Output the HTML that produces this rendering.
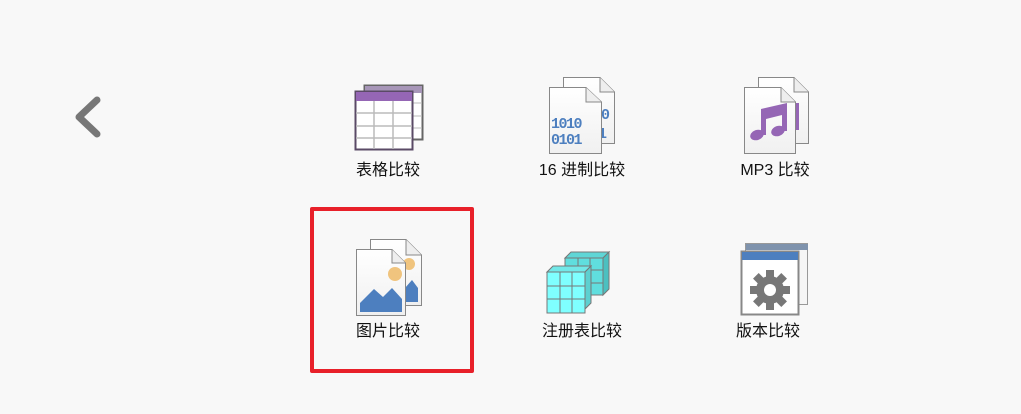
<!DOCTYPE html>
<html><head><meta charset="utf-8"><style>
html,body{margin:0;padding:0;background:#f8f8f8;width:1021px;height:414px;overflow:hidden;position:relative;font-family:"Liberation Sans","Noto Sans CJK SC",sans-serif;}
svg{position:absolute;left:0;top:0}
.l{position:absolute;font-size:16px;color:#111;white-space:nowrap;transform:translateX(-50%);line-height:20px}
.box{position:absolute;left:310px;top:207px;width:156px;height:158px;border:4px solid #e8202a;border-radius:2px}
</style></head><body>
<svg width="1021" height="414" viewBox="0 0 1021 414">
<defs>
<linearGradient id="pg" x1="0" y1="0" x2="0" y2="1"><stop offset="0" stop-color="#fff"/><stop offset="1" stop-color="#f0f0f0"/></linearGradient>
</defs>
<polyline points="97,100 79,117 97,134" fill="none" stroke="#777" stroke-width="7" stroke-linecap="round" stroke-linejoin="round"/>

<!-- table icon -->
<rect x="364.5" y="85.5" width="58" height="54" fill="#fff" stroke="#666" stroke-width="2"/>
<rect x="365" y="86" width="57" height="7" fill="#a796b8"/>
<g stroke="#bbb"><line x1="412" y1="103" x2="422" y2="103"/><line x1="412" y1="116" x2="422" y2="116"/><line x1="412" y1="128" x2="422" y2="128"/></g>
<rect x="355.5" y="91.5" width="57" height="58" fill="#fff" stroke="#5a4a66" stroke-width="2"/>
<rect x="356" y="92" width="56" height="9" fill="#9566b5"/>
<g stroke="#bbb" stroke-width="1.5"><line x1="356" y1="113" x2="412" y2="113"/><line x1="356" y1="126" x2="412" y2="126"/><line x1="356" y1="138" x2="412" y2="138"/><line x1="374" y1="101" x2="374" y2="149"/><line x1="393" y1="101" x2="393" y2="149"/></g>

<!-- hex icon -->
<path d="M563.5,77.5 H600 L614.5,92 V143.5 H563.5 Z" fill="url(#pg)" stroke="#888"/>
<path d="M600,77.5 V92 H614.5" fill="#eee" stroke="#888"/>
<text x="601" y="119" font-family="Liberation Mono,monospace" font-weight="bold" font-size="15" fill="#4d7fbf">0</text>
<text x="598" y="138" font-family="Liberation Mono,monospace" font-weight="bold" font-size="15" fill="#4d7fbf">1</text>
<path d="M549.5,87.5 H586 L601.5,102 V153.5 H549.5 Z" fill="url(#pg)" stroke="#888"/>
<path d="M586,87.5 V102 H601.5" fill="#eee" stroke="#888"/>
<text x="551" y="128" font-family="Liberation Mono,monospace" font-weight="bold" font-size="15" fill="#4d7fbf" letter-spacing="-1.5">1010</text>
<text x="551" y="144" font-family="Liberation Mono,monospace" font-weight="bold" font-size="15" fill="#4d7fbf" letter-spacing="-1.5">0101</text>

<!-- mp3 icon -->
<path d="M758.5,77.5 H794 L808.5,92 V143.5 H758.5 Z" fill="url(#pg)" stroke="#888"/>
<path d="M794,77.5 V92 H808.5" fill="#eee" stroke="#888"/>
<rect x="795" y="103" width="4" height="27" fill="#9566b5"/>
<path d="M744.5,87.5 H781 L795.5,102 V153.5 H744.5 Z" fill="url(#pg)" stroke="#888"/>
<path d="M781,87.5 V102 H795.5" fill="#eee" stroke="#888"/>
<path d="M761,109 L787,103 V131 H782 V115 L766,119 V135 H761 Z" fill="#9566b5"/>
<ellipse cx="757" cy="135" rx="7" ry="5" fill="#9566b5" transform="rotate(-20 757 135)"/>
<ellipse cx="778" cy="131" rx="7" ry="5" fill="#9566b5" transform="rotate(-20 778 131)"/>

<!-- image icon -->
<path d="M370.5,239.5 H406 L421.5,255 V305.5 H370.5 Z" fill="url(#pg)" stroke="#888"/>
<path d="M406,239.5 V255 H421.5" fill="#eee" stroke="#888"/>
<circle cx="409" cy="264" r="6" fill="#f0c47e"/>
<path d="M405,288 L412,280 L418,288 V302 H405 Z" fill="#4d7fbf"/>
<path d="M356.5,249.5 H392 L405.5,263 V315.5 H356.5 Z" fill="url(#pg)" stroke="#888"/>
<path d="M392,249.5 V263 H405.5" fill="#eee" stroke="#888"/>
<circle cx="395" cy="274" r="7" fill="#f0c47e"/>
<path d="M360,312 V303 L374,289 L383,297 L392,288 L402,299 V312 Z" fill="#4d7fbf"/>

<!-- registry cubes -->
<g stroke="#777" stroke-width="1">
<path d="M565,258 L571,252 H609 L603,258 Z" fill="#5fd6d6"/>
<path d="M603,258 L609,252 V289 L603,295 Z" fill="#4cc0c0"/>
<rect x="565" y="258" width="38" height="37" fill="#60dede"/>
<path d="M547,272 L553,266 H591 L585,272 Z" fill="#72e8e8"/>
<path d="M585,272 L591,266 V303 L585,309 Z" fill="#5cd0d0"/>
<rect x="547" y="272" width="38" height="41" fill="#7fffff"/>
<line x1="560" y1="272" x2="560" y2="313"/><line x1="572" y1="272" x2="572" y2="313"/>
<line x1="547" y1="286" x2="585" y2="286"/><line x1="547" y1="299" x2="585" y2="299"/>
<line x1="578" y1="258" x2="578" y2="266"/><line x1="590" y1="258" x2="590" y2="266"/>
<line x1="591" y1="270" x2="603" y2="270"/><line x1="591" y1="283" x2="603" y2="283"/>
</g>

<!-- version icon -->
<rect x="745.5" y="243.5" width="62" height="61" fill="#f6f6f6" stroke="#999"/>
<rect x="746" y="244" width="62" height="6" fill="#7f93ad"/>
<rect x="741.5" y="251.5" width="57" height="63" fill="#fff" stroke="#888" stroke-width="2"/>
<rect x="742" y="252" width="56" height="8" fill="#4d7fbf"/>
<g transform="translate(770,290)" fill="#777">
<circle r="14"/>
<g><rect x="-4" y="-20" width="8" height="40"/><rect x="-4" y="-20" width="8" height="40" transform="rotate(45)"/><rect x="-4" y="-20" width="8" height="40" transform="rotate(90)"/><rect x="-4" y="-20" width="8" height="40" transform="rotate(135)"/></g>
<circle r="6" fill="#fff"/>
</g>
</svg>
<div class="box"></div>
<div class="l" style="left:388px;top:161px">表格比较</div>
<div class="l" style="left:582px;top:161px">16 进制比较</div>
<div class="l" style="left:775px;top:161px">MP3 比较</div>
<div class="l" style="left:388px;top:322px">图片比较</div>
<div class="l" style="left:582px;top:322px">注册表比较</div>
<div class="l" style="left:768px;top:322px">版本比较</div>
</body></html>
